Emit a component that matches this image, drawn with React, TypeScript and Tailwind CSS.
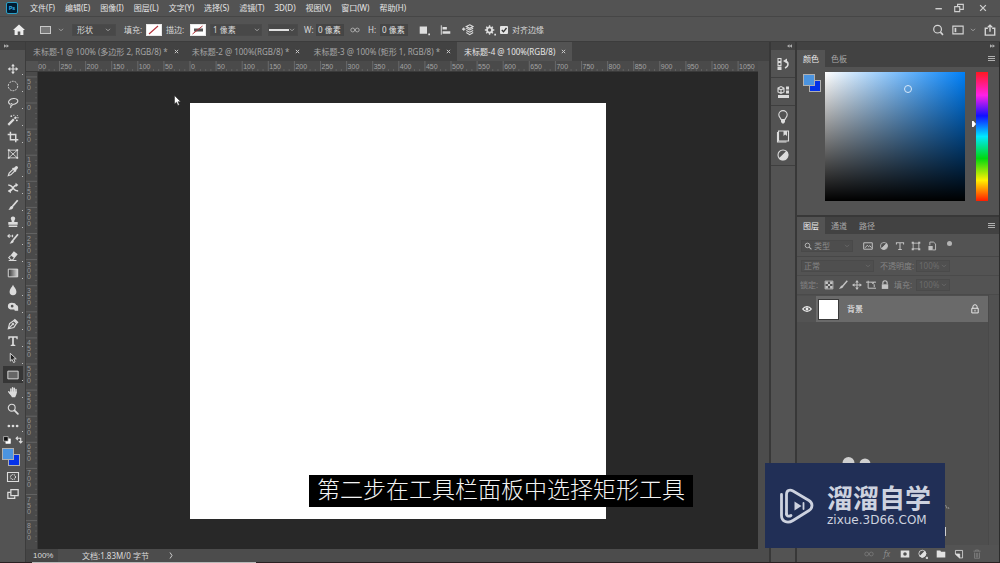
import type { ReactNode } from "react";

const menus = ["文件(F)", "编辑(E)", "图像(I)", "图层(L)", "文字(Y)", "选择(S)", "滤镜(T)", "3D(D)", "视图(V)", "窗口(W)", "帮助(H)"];

const documents = [
  { name: "未标题-1 @ 100% (多边形 2, RGB/8) *", active: false },
  { name: "未标题-2 @ 100%(RGB/8) *", active: false },
  { name: "未标题-3 @ 100% (矩形 1, RGB/8) *", active: false },
  { name: "未标题-4 @ 100%(RGB/8)", active: true },
];

/** Distance on screen between two labelled ruler marks (50 document pixels). */
const RULER_STEP = 26.1;

function Glyph({ children, className = "size-3.5" }: { children: ReactNode; className?: string }) {
  return (
    <svg viewBox="0 0 14 14" className={`shrink-0 ${className}`} fill="none" stroke="currentColor" strokeWidth="1.1" aria-hidden="true">
      {children}
    </svg>
  );
}

function Chevron() {
  return (
    <svg viewBox="0 0 6 4" className="pointer-events-none h-1 w-1.5 shrink-0" fill="none" stroke="#a0a0a0" aria-hidden="true">
      <path d="M1 .8 3 2.8 5 .8" />
    </svg>
  );
}

const tools: { label: string; icon: ReactNode; more?: boolean; active?: boolean }[] = [
  {
    label: "移动工具",
    more: true,
    icon: (
      <Glyph>
        <path d="M7 3v8M3 7h8" strokeWidth="1.400" />
        <path d="M7 .8 9.200 3.800H4.800zM7 13.200 9.200 10.200H4.800zM.8 7 3.800 4.800v4.400zM13.200 7 10.200 4.800v4.400z" fill="currentColor" stroke="none" />
      </Glyph>
    ),
  },
  { label: "椭圆选框工具", more: true, icon: <Glyph><circle cx="7" cy="7" r="5.500" strokeDasharray="2.2 1.2" /></Glyph> },
  {
    label: "套索工具",
    more: true,
    icon: (
      <Glyph>
        <path d="M4.200 8.800C1.800 8 1.200 5.600 2.700 4 5 1.300 10.500 1 12.300 3.400 13.500 5.600 10.800 8.500 6.500 8.800" strokeWidth="1.300" />
        <path d="M4.500 7.600a1.400 1.400 0 1 1-.6 2.500c.9.7.8 1.700 0 2.700" strokeWidth="1.300" />
      </Glyph>
    ),
  },
  {
    label: "魔棒工具",
    more: true,
    icon: (
      <Glyph>
        <path d="m1.500 12.700 6.500-6.500" strokeWidth="2.600" />
        <path d="m8.800 5.400 2-2" strokeWidth="2.400" />
        <path d="M5 1.500v2M4 2.500h2M11.500 6.500v2M10.500 7.500h2M8 .8v1.500M12.500 1.500l-.8.8M12 4.500h1.500" strokeWidth="1.200" />
      </Glyph>
    ),
  },
  { label: "裁剪工具", more: true, icon: <Glyph><path d="M4 .8v9.400h9.200M.8 4h9.400v9.200" strokeWidth="1.700" /></Glyph> },
  {
    label: "图框工具",
    icon: (
      <Glyph>
        <path d="M2 2.500h10v9H2zM2 2.500l10 9M12 2.500l-10 9" strokeWidth="1" />
        <path d="M1 1.500h2v2H1zM11 1.500h2v2h-2zM1 10.500h2v2H1zM11 10.500h2v2h-2z" fill="currentColor" stroke="none" />
      </Glyph>
    ),
  },
  {
    label: "吸管工具",
    more: true,
    icon: (
      <Glyph>
        <path d="M7 5 2.500 9.500 1.500 12.500l3-1L9 7" strokeWidth="1.300" />
        <path d="m6.500 3.500 4 4" strokeWidth="1.900" />
        <path d="m9 5 2-2" strokeWidth="3.600" strokeLinecap="round" />
      </Glyph>
    ),
  },
  {
    label: "内容感知移动工具",
    more: true,
    icon: (
      <Glyph>
        <path d="M1.500 3.500c3.500 0 4 1.500 5.500 3.500s2 3.500 6 3.500M2 10.500c3.500 0 3.800-1.700 5-3.500s2-3.500 4-3.500" strokeWidth="1.900" />
        <path d="m10 .8 3.200 2.700-3.200 2.500zM4.500 8 .8 10.500l3.700 2.700z" fill="currentColor" stroke="none" />
      </Glyph>
    ),
  },
  {
    label: "画笔工具",
    more: true,
    icon: (
      <Glyph>
        <path d="m12.500 1.500-6 7" strokeWidth="2.100" />
        <path d="M6.600 8.200c1.200 1.200.8 3-1 3.800-1.200.6-2.600.8-4 .3C3 11.600 3 10.800 3.300 10c.6-1.700 2-2.300 3.300-1.800z" fill="currentColor" stroke="none" />
      </Glyph>
    ),
  },
  {
    label: "仿制图章工具",
    more: true,
    icon: (
      <Glyph>
        <path d="M7 .5a2.500 2.500 0 0 1 2.400 3.400C8.600 5.200 8.400 6 8.500 7H12.500v3.200h-11V7h4c.1-1-.1-1.800-.9-3.100A2.500 2.500 0 0 1 7 .5zM2 11.200h10v1.500H2z" fill="currentColor" stroke="none" />
      </Glyph>
    ),
  },
  {
    label: "历史记录画笔工具",
    more: true,
    icon: (
      <Glyph>
        <path d="M12.800 1.500 7 8.500" strokeWidth="2.100" />
        <path d="M7.400 8.200c1 1.200.4 2.900-1.200 3.600-1 .5-2.200.6-3.200.2 1.200-.6 1.300-1.200 1.600-2 .5-1.500 1.700-2.100 2.800-1.800z" fill="currentColor" stroke="none" />
        <path d="M.8 3.500h4.700M3 1.500l-2 2 2 2M6.500 2v3" strokeWidth="1.300" />
      </Glyph>
    ),
  },
  {
    label: "橡皮擦工具",
    more: true,
    icon: (
      <Glyph>
        <path d="m8 1.500 4.500 3.500-3.800 4.500L4.200 6z" fill="currentColor" stroke="none" />
        <path d="M4.200 6.500 2 9l3 2.700h1.500l1.800-2.200M2 12.300h9" strokeWidth="1.200" />
      </Glyph>
    ),
  },
  {
    label: "渐变工具",
    more: true,
    icon: (
      <Glyph>
        <defs>
          <linearGradient id="tool-gradient">
            <stop offset="0" stopColor="#333" />
            <stop offset="1" stopColor="#d8d8d8" />
          </linearGradient>
        </defs>
        <path d="M1.500 2.500h11v9h-11z" fill="url(#tool-gradient)" />
      </Glyph>
    ),
  },
  { label: "模糊工具", more: true, icon: <Glyph><path d="M7 1C8 3.800 11 6 11 9a4 4 0 0 1-8 0C3 6 6 3.800 7 1z" fill="currentColor" stroke="none" /></Glyph> },
  {
    label: "减淡工具",
    more: true,
    icon: (
      <Glyph>
        <path fillRule="evenodd" d="M5.500 2c3.200 0 4.500 1 5.200 2.700 1.700.3 2.300 1.600 2.300 3.100v3.700H9c0-1-.5-1.600-1.500-1.500-4.300.3-6.500-1-6.500-4S3.300 2 5.500 2zm.5 2.500A1.600 1.600 0 1 0 6 7.700 1.600 1.600 0 0 0 6 4.500z" fill="currentColor" stroke="none" />
      </Glyph>
    ),
  },
  {
    label: "钢笔工具",
    more: true,
    icon: (
      <Glyph>
        <path d="m1.500 12.500 1.500-6L8 3l3.200 3.200L8 11zM2 12l4.500-4.500" strokeWidth="1.300" />
        <path d="M8.500 1.500 12.700 5.700" strokeWidth="2" />
        <circle cx="7" cy="7" r="1" fill="currentColor" />
      </Glyph>
    ),
  },
  { label: "横排文字工具", more: true, icon: <Glyph><path d="M1.500 1.500h11v3.500h-1.300L10.700 3.200H8v8l1.700.4v1.200H4.300v-1.200L6 11.200v-8H3.300L2.800 5H1.500z" fill="currentColor" stroke="none" /></Glyph> },
  {
    label: "路径选择工具",
    more: true,
    icon: <Glyph><path d="M3.800 1.500v9.200l2.200-2 1.600 3.600 1.800-.8-1.600-3.500h3z" fill="#202020" stroke="currentColor" /></Glyph>,
  },
  { label: "矩形工具", more: true, active: true, icon: <Glyph><path d="M1 2.500h12v9H1z" fill="#666" /></Glyph> },
  {
    label: "抓手工具",
    more: true,
    icon: (
      <Glyph>
        <path d="M4.500 8V3.500M6.500 7V2M8.500 7V2.500M10.500 7.500V4M4 9 2 6.800" strokeWidth="1.700" strokeLinecap="round" />
        <path d="M3.800 6.500h7.500c.2 2.500-.3 4-1.800 6.500H5.800C4.500 11 3 9.500 2.500 8z" fill="currentColor" stroke="none" />
      </Glyph>
    ),
  },
  {
    label: "缩放工具",
    icon: (
      <Glyph>
        <circle cx="5.500" cy="5.500" r="4" strokeWidth="1.300" />
        <path d="m8.700 8.700 4 4" strokeWidth="2" strokeLinecap="round" />
      </Glyph>
    ),
  },
  {
    label: "编辑工具栏",
    more: true,
    icon: (
      <Glyph>
        <g fill="currentColor" stroke="none">
          <circle cx="2.200" cy="7" r="1.600" />
          <circle cx="7" cy="7" r="1.600" />
          <circle cx="11.800" cy="7" r="1.600" />
        </g>
      </Glyph>
    ),
  },
];

function MenuBar() {
  return (
    <header className="flex h-[17px] shrink-0 items-center border-b border-[#464646] pr-3">
      <div className="ml-1.5 flex h-3 w-3 items-center justify-center rounded-[2px] border border-[#2ba0c8] bg-[#001d33] text-[6px] font-bold text-[#31a8e0]">Ps</div>
      <nav className="ml-3 flex gap-2.5 text-[8px] text-[#e4e4e4]">
        {menus.map((m) => (
          <button key={m} type="button" className="leading-4 whitespace-nowrap">
            {m}
          </button>
        ))}
      </nav>
      <div className="ml-auto flex items-center gap-2.5 text-[#cfcfcf]">
        <button type="button" aria-label="最小化">
          <Glyph className="size-2.5"><path d="M2 8h9" strokeWidth="2" /></Glyph>
        </button>
        <button type="button" aria-label="还原">
          <Glyph className="size-2.5"><path d="M1 5h7v7H1zM5 5V2h8v7H8" strokeWidth="1.600" /></Glyph>
        </button>
        <button type="button" aria-label="关闭" className="ml-1">
          <Glyph className="size-2.5"><path d="m3 3 8 8M11 3l-8 8" strokeWidth="1.800" /></Glyph>
        </button>
      </div>
    </header>
  );
}

function NumberBox({ label, value }: { label: string; value: string }) {
  return <input aria-label={label} defaultValue={value} className="h-3 w-7 border border-[#454545] bg-[#464646] px-px text-[8px] text-[#e0e0e0]" />;
}

function OptionsBar() {
  return (
    <section className="flex h-6 shrink-0 items-center pt-px pr-1 text-[8px] whitespace-nowrap text-[#d8d8d8]">
      <button type="button" aria-label="主页" className="ml-3">
        <Glyph className="size-3.5"><path d="M7 1.500 13 7h-1.600v5H8.300V8.500H5.700V12H2.600V7H1z" fill="#ececec" stroke="none" /></Glyph>
      </button>
      <button type="button" aria-label="矩形工具预设" className="ml-3.5 flex w-6 items-center justify-between">
        <span className="h-2 w-[11px] border border-[#c8c8c8] bg-[#777]" />
        <Chevron />
      </button>
      <label className="ml-2 flex h-3 w-11 items-center border border-[#4a4a4a] bg-[#484848] pr-1">
        <select aria-label="工具模式" className="min-w-0 flex-1 appearance-none bg-transparent pl-1 leading-3 outline-none">
          <option>形状</option>
        </select>
        <Chevron />
      </label>
      <span className="ml-2 w-[22px]">填充:</span>
      <button type="button" aria-label="填充颜色" className="h-3 w-4 border border-[#e8e8e8] bg-white">
        <svg viewBox="0 0 14 10" className="size-full" preserveAspectRatio="none"><path d="m2 9 9-8" stroke="#b3323a" strokeWidth="1.200" /></svg>
      </button>
      <span className="ml-1 w-6">描边:</span>
      <button type="button" aria-label="描边颜色" className="h-3 w-4 border border-[#e8e8e8] bg-white">
        <svg viewBox="0 0 14 10" className="size-full" preserveAspectRatio="none">
          <path d="M3 3.500h9v3H3z" fill="#555" />
          <path d="m1.500 9 10-8" stroke="#b3323a" />
        </svg>
      </button>
      <label className="ml-1 flex h-3 w-[52px] items-center border border-[#4a4a4a] bg-[#484848] pr-px">
        <input aria-label="描边宽度" defaultValue="1 像素" className="min-w-0 flex-1 bg-transparent pl-0.5 leading-3 outline-none" />
        <Chevron />
      </label>
      <button type="button" aria-label="描边类型" className="ml-1.5 flex h-3 w-[30px] items-center justify-between border border-[#4a4a4a] bg-[#484848] pr-0.5">
        <span className="h-0.5 w-5 bg-[#e0e0e0]" />
        <Chevron />
      </button>
      <span className="ml-1.5 w-3">W:</span>
      <NumberBox label="宽度" value="0 像素" />
      <button type="button" aria-label="链接宽高" className="ml-1.5 text-[#bdbdbd]">
        <Glyph className="size-2.5"><circle cx="3.800" cy="7" r="2.700" /><circle cx="10.200" cy="7" r="2.700" /></Glyph>
      </button>
      <span className="ml-2 w-3">H:</span>
      <NumberBox label="高度" value="0 像素" />
      <div className="ml-2.5 flex items-center gap-2.5 text-[#dedede]">
        <button type="button" aria-label="路径操作">
          <Glyph className="size-3"><path d="M2 3h8.500v8.500H2zM12 11h2v2h-2z" fill="currentColor" stroke="none" /></Glyph>
        </button>
        <button type="button" aria-label="路径对齐方式">
          <Glyph className="size-3"><path d="M1.500 1.500v11" /><path d="M3 3.500h5v3H3zM3 8.500h9v3H3z" fill="currentColor" stroke="none" /></Glyph>
        </button>
        <button type="button" aria-label="路径排列方式">
          <Glyph className="size-3"><path d="m9 1 4 2-4 2-4-2zM5 5l4 2 4-2M5 7.500l4 2 4-2M5 10l4 2.500 4-2.500M0 6h4M2 4v4" strokeWidth="1.300" /></Glyph>
        </button>
        <button type="button" aria-label="更多选项">
          <Glyph className="size-3"><circle cx="6.500" cy="7" r="3" strokeWidth="2.200" /><path d="M6.500 1.500v2M6.500 10.500v2M1 7h2M10 7h2M2.600 3.100 4 4.500M9 9.500l1.400 1.400M2.600 10.900 4 9.500M9 4.500l1.400-1.400" strokeWidth="1.600" /><path d="M12 11.500h2v2h-2z" fill="currentColor" stroke="none" /></Glyph>
        </button>
      </div>
      <label className="ml-1 flex items-center gap-1">
        <span className="relative flex size-2">
          <input type="checkbox" defaultChecked className="peer size-2 appearance-none rounded-[1px] bg-[#e3e3e3]" />
          <svg viewBox="0 0 8 8" className="pointer-events-none absolute inset-0 hidden size-2 peer-checked:block" fill="none" stroke="#333" strokeWidth="1.300"><path d="m1.800 4 1.700 1.800L6.500 2" /></svg>
        </span>
        对齐边缘
      </label>
      <div className="ml-auto flex items-center gap-2 text-[#d6d6d6]">
        <button type="button" aria-label="搜索">
          <Glyph className="size-3"><circle cx="6.500" cy="6" r="4.500" strokeWidth="1.400" /><path d="m9.800 9.500 3 3.200" strokeWidth="1.800" /></Glyph>
        </button>
        <button type="button" aria-label="工作区" className="flex items-center gap-1.5">
          <Glyph className="size-3"><path d="M1 2.500h12v9H1z" strokeWidth="1.300" /><path d="M3 4.500h2v5H3z" fill="currentColor" stroke="none" /></Glyph>
          <Chevron />
        </button>
        <button type="button" aria-label="共享">
          <Glyph className="size-3"><path d="M4.500 5H1.500v8h11V5h-3M7 9V1.500M4.500 3.800 7 1.300l2.500 2.500" strokeWidth="1.600" /></Glyph>
        </button>
      </div>
    </section>
  );
}

function CollapseMark({ right = false }: { right?: boolean }) {
  return (
    <svg viewBox="0 0 6 4" className="h-1 w-[5px]" fill="#b0b0b0" aria-hidden="true">
      {right ? <path d="m0 0 3 2-3 2zM3 0l3 2-3 2z" /> : <path d="M3 0 0 2l3 2zM6 0 3 2l3 2z" />}
    </svg>
  );
}

function SwatchPair() {
  return (
    <div className="grid h-[18px] w-[18px] grid-cols-3 grid-rows-3">
      <button type="button" aria-label="背景色" className="col-span-2 col-start-2 row-span-2 row-start-2 border border-[#b0b0b0] bg-[#0432e8]" />
      <button type="button" aria-label="前景色" className="col-span-2 col-start-1 row-span-2 row-start-1 border border-[#b0b0b0] bg-[#4b94e0]" />
    </div>
  );
}

function Toolbar() {
  return (
    <aside className="flex w-[26px] shrink-0 flex-col border-r border-[#3c3c3c]">
      <div className="flex h-2 items-center bg-[#424242] pl-1">
        <CollapseMark right />
      </div>
      <div className="flex flex-col items-center pt-2.5 text-[#dcdcdc]">
        {tools.map((t) => (
          <button key={t.label} type="button" aria-label={t.label} className={`relative flex h-[17px] w-5 items-center justify-center [&>svg]:size-3 ${t.active ? "bg-[#363636]" : ""}`}>
            {t.icon}
            {t.more && <span className="absolute right-0 bottom-0.5 size-px bg-[#c0c0c0]" />}
          </button>
        ))}
        <div className="mt-0.5 flex gap-1">
          <button type="button" aria-label="默认颜色">
            <Glyph className="size-2"><path d="M5 5h8v8H5z" fill="#fff" stroke="#fff" /><path d="M1 1h8v8H1z" fill="#111" stroke="#ddd" /></Glyph>
          </button>
          <button type="button" aria-label="切换颜色">
            <Glyph className="size-2"><path d="M2 4h8v7M5 1 2 4l3 3M7 9l3 3 3-3" strokeWidth="2" /></Glyph>
          </button>
        </div>
        <div className="mt-1 mr-1">
          <SwatchPair />
        </div>
        <button type="button" aria-label="快速蒙版" className="mt-1">
          <Glyph className="size-3.5"><path d="M1.500 2.500h11v9h-11z" /><circle cx="7" cy="7" r="2.500" strokeDasharray="1 .8" /></Glyph>
        </button>
        <button type="button" aria-label="屏幕模式" className="mt-1">
          <Glyph className="size-3"><path d="M4.500 5H1v7h8V9.500" strokeWidth="1.500" /><path d="M4.500 2H13v7H4.500z" strokeWidth="1.500" /></Glyph>
        </button>
      </div>
    </aside>
  );
}

function HorizontalRuler() {
  const marks = Array.from({ length: 28 }, (_, i) => (i - 6) * 50);
  return (
    <svg className="h-2.5 min-w-0 flex-1" aria-label="水平标尺">
      {marks.map((m) => {
        const x = 152 + (m / 50) * RULER_STEP;
        return (
          <g key={m}>
            <path d={`M${x} 0v10`} stroke="#686868" strokeWidth="1" />
            {[1, 2, 3, 4].map((n) => (
              <path key={n} d={`M${x + (n * RULER_STEP) / 5} 8v2`} stroke="#606060" strokeWidth="1" />
            ))}
            <text x={x + 1} y="8" fill="#a2a2a2" className="font-['Liberation_Sans',sans-serif] text-[7px]">
              {Math.abs(m)}
            </text>
          </g>
        );
      })}
    </svg>
  );
}

function VerticalRuler() {
  const marks = Array.from({ length: 18 }, (_, i) => (i - 1) * 50);
  return (
    <svg className="h-full w-3 shrink-0 border-r border-[#3a3a3a] bg-[#4a4a4a]" aria-label="垂直标尺">
      {marks.map((m) => {
        const y = 31 + (m / 50) * RULER_STEP;
        return (
          <g key={m}>
            <path d={`M0 ${y}h12`} stroke="#636363" strokeWidth="1" />
            {[1, 2, 3, 4].map((n) => (
              <path key={n} d={`M9 ${y + (n * RULER_STEP) / 5}h3`} stroke="#5c5c5c" strokeWidth="1" />
            ))}
            {String(Math.abs(m)).split("").map((digit, i) => (
              <text key={i} x="1" y={y + 7 + i * 6} fill="#989898" className="font-['Liberation_Sans',sans-serif] text-[7px]">
                {digit}
              </text>
            ))}
          </g>
        );
      })}
    </svg>
  );
}

function Workspace() {
  return (
    <main className="flex min-w-0 flex-1 flex-col">
      <div className="flex h-[19px] shrink-0 bg-[#424242] text-[8px] whitespace-nowrap">
        {documents.map((d) => (
          <div key={d.name} className={`flex items-center gap-1.5 pr-1.5 pl-[7px] ${d.active ? "bg-[#535353] text-[#e6e6e6]" : "text-[#a6a6a6]"}`}>
            <button type="button">{d.name}</button>
            <button type="button" aria-label="关闭文档">
              <svg viewBox="0 0 6 6" className="size-[5px]" stroke="#c8c8c8" strokeWidth="1.200"><path d="m1 1 4 4M5 1 1 5" /></svg>
            </button>
          </div>
        ))}
      </div>
      <div className="flex min-h-0 flex-1">
        <div className="flex min-w-0 flex-1 flex-col">
          <div className="flex h-[11px] shrink-0 border-b border-[#3a3a3a] bg-[#4a4a4a]">
            <div className="w-3 shrink-0 bg-[#525252]" />
            <HorizontalRuler />
          </div>
          <div className="flex min-h-0 flex-1">
            <VerticalRuler />
            <div className="flex min-w-0 flex-1 items-center justify-center bg-[#282828]">
              <div className="aspect-square w-[416px] bg-white" />
            </div>
          </div>
        </div>
        <div className="w-[11px] shrink-0 bg-[#4c4c4c]" />
      </div>
      <footer className="flex h-[13px] shrink-0 items-center bg-[#4c4c4c] text-[8px] text-[#dadada]">
        <span className="flex h-full w-8 items-center bg-[#454545] pl-[7px]">
          <span className="font-['Liberation_Sans',sans-serif] whitespace-nowrap">100%</span>
        </span>
        <span className="ml-6 w-[87px] whitespace-nowrap">
          文档:1.83M/0 字节
        </span>
        <button type="button" aria-label="状态栏选项">
          <svg viewBox="0 0 4 7" className="h-[7px] w-1" fill="none" stroke="#ccc"><path d="m1 .5 2 3-2 3" /></svg>
        </button>
      </footer>
    </main>
  );
}

function IconDock() {
  return (
    <aside className="flex w-7 shrink-0 flex-col border-x-2 border-[#383838] text-[#dcdcdc]">
      <div className="flex h-2 items-center justify-center bg-[#424242] pl-3">
        <CollapseMark />
      </div>
      <div className="flex h-7 items-center justify-center border-b border-[#3f3f3f]">
        <button type="button" aria-label="历史记录">
          <Glyph className="size-3.5"><path d="M2 1.500h3v3H2zM2 5.500h3v3H2z" /><path d="M1.500 9.500H5.500v3.500h-4zM7 4l4-2.500v5z" fill="currentColor" stroke="none" /><path d="M9 4c4 .5 4 5 0 7" strokeWidth="1.500" /></Glyph>
        </button>
      </div>
      <div className="flex h-7 items-center justify-center border-b border-[#3f3f3f]">
        <button type="button" aria-label="属性">
          <Glyph className="size-3.5"><path d="m2 3 3-1.500L8 3v4L5 8.500 2 7zM2 3l3 2 3-2M5 5v3" /><path d="M10 1.500h3v3h-3zM10 5.500h3v3h-3zM2 10h11v3H2z" fill="currentColor" stroke="none" /></Glyph>
        </button>
      </div>
      <div className="flex h-[60px] flex-col items-center justify-center gap-[5px] border-b border-[#3f3f3f]">
        <button type="button" aria-label="学习">
          <Glyph className="size-3.5"><path d="M5 9.500C5 8 2.800 7.500 2.800 4.800a4.200 4.200 0 0 1 8.400 0C11.200 7.500 9 8 9 9.500z" /><path d="M5 10h4v2L7.800 13.500H6.200L5 12z" fill="currentColor" stroke="none" /></Glyph>
        </button>
        <button type="button" aria-label="库">
          <Glyph className="size-3.5"><path d="M2.500 2H12.500v10h-10z" /><path d="M2.500 3.500h-1v9.500h9" /><path d="M7.500 2h3.500v5L9.200 5.500 7.500 7z" fill="currentColor" stroke="none" /></Glyph>
        </button>
        <button type="button" aria-label="调整">
          <Glyph className="size-3.5"><circle cx="7" cy="7" r="5" /><path d="M10.500 3.500a5 5 0 0 1-7 7z" fill="currentColor" /></Glyph>
        </button>
      </div>
    </aside>
  );
}

function PanelTabs({ tabs }: { tabs: string[] }) {
  return (
    <div className="flex h-[17px] shrink-0 items-stretch bg-[#424242] text-[8px]">
      {tabs.map((t, i) => (
        <button key={t} type="button" className={`px-1.5 ${i === 0 ? "bg-[#535353] text-[#ececec]" : "text-[#a8a8a8]"}`}>
          {t}
        </button>
      ))}
      <button type="button" aria-label="面板菜单" className="mr-1 ml-auto flex items-center">
        <svg viewBox="0 0 7 5" className="h-[5px] w-[7px]" stroke="#b0b0b0" strokeWidth="1"><path d="M0 .5h7M0 2.500h7M0 4.500h7" /></svg>
      </button>
    </div>
  );
}

function ColorPanel() {
  return (
    <section>
      <PanelTabs tabs={["颜色", "色板"]} />
      <div className="flex h-[148px] pt-[5px] pr-[11px] pl-1.5">
        <div className="w-[22px] pt-0.5">
          <SwatchPair />
        </div>
        <div className="relative h-[129px] flex-1 bg-[linear-gradient(to_top,#000,transparent),linear-gradient(to_right,#fff,#0080f8)]">
          <span className="absolute top-[13px] left-[79px] size-2 rounded-full border border-[#d8e9fa]" />
        </div>
        <div className="flex w-[11px] items-start justify-end pt-[49px]">
          <svg viewBox="0 0 4 6" className="h-1.5 w-1" fill="#fff"><path d="M0 0h1.500L4 3 1.500 6H0z" /></svg>
        </div>
        <input
          type="range"
          aria-label="色相"
          min="0"
          max="360"
          defaultValue="211"
          className="h-[129px] w-3 appearance-none bg-[linear-gradient(to_bottom,#ff1820,#ff20e8_18%,#1010ff_34%,#00e8ff_50%,#00d810_67%,#fff000_84%,#ff1c00)] [writing-mode:vertical-lr] [&::-webkit-slider-thumb]:appearance-none [&::-webkit-slider-thumb]:opacity-0"
        />
      </div>
    </section>
  );
}

function DimSelect({ label, value, className }: { label: string; value: string; className: string }) {
  return (
    <label className={`flex h-3 items-center border border-[#4a4a4a] bg-[#4f4f4f] pr-0.5 ${className}`}>
      <select aria-label={label} className="min-w-0 flex-1 appearance-none bg-transparent pl-0.5 leading-3 outline-none">
        <option>{value}</option>
      </select>
      <span className="flex opacity-30">
        <Chevron />
      </span>
    </label>
  );
}

function LayersPanel() {
  return (
    <section className="flex min-h-0 flex-1 flex-col border-t-2 border-[#383838] text-[8px]">
      <PanelTabs tabs={["图层", "通道", "路径"]} />
      <div className="flex h-[23px] shrink-0 items-center border-b border-[#474747] pt-0.5 pl-1 text-[#8c8c8c]">
        <label className="flex h-3 w-[52px] items-center border border-[#494949] bg-[#4d4d4d] px-0.5">
          <Glyph className="size-2"><circle cx="6" cy="6" r="4" stroke="#bbb" strokeWidth="1.600" /><path d="m9 9 4 4" stroke="#bbb" strokeWidth="1.800" /></Glyph>
          <select aria-label="筛选类型" className="min-w-0 flex-1 appearance-none bg-transparent pl-0.5 leading-3 outline-none">
            <option>类型</option>
          </select>
          <span className="flex opacity-30"><Chevron /></span>
        </label>
        <div className="ml-2.5 flex gap-1.5 text-[#c0c0c0]">
          <button type="button" aria-label="像素图层"><Glyph className="size-2.5"><path d="M1 2.500h12v9H1zM3 9.500 6 6l2 2 1.500-1.500L12 9.500" strokeWidth="1.400" /></Glyph></button>
          <button type="button" aria-label="调整图层"><Glyph className="size-2.5"><circle cx="7" cy="7" r="5" /><path d="M10.500 3.500a5 5 0 0 1-7 7z" fill="currentColor" /></Glyph></button>
          <button type="button" aria-label="文字图层"><Glyph className="size-2.5"><path d="M2 5V2.500h10V5M7 2.500V12M4.500 12h5" strokeWidth="1.500" /></Glyph></button>
          <button type="button" aria-label="形状图层"><Glyph className="size-2.5"><path d="M3 3h8v8H3z" strokeWidth="1.300" /><path d="M1 1h3v3H1zM10 1h3v3h-3zM1 10h3v3H1zM10 10h3v3h-3z" fill="currentColor" stroke="none" /></Glyph></button>
          <button type="button" aria-label="智能对象"><Glyph className="size-2.5"><path d="M4 6V1.500h5L12 4v8.500H8" strokeWidth="1.300" /><path d="M2 7h6v6H2z" fill="currentColor" stroke="none" /></Glyph></button>
        </div>
        <button type="button" aria-label="图层筛选开关" className="mb-1.5 ml-2.5 size-[5px] rounded-full bg-[#b4b4b4]" />
      </div>
      <div className="flex h-[19px] shrink-0 items-center border-b border-[#4a4a4a] pl-1 text-[#858585]">
        <DimSelect label="混合模式" value="正常" className="w-[73px]" />
        <span className="ml-1.5 w-[36px] whitespace-nowrap">不透明度:</span>
        <DimSelect label="不透明度" value="100%" className="w-[34px] text-[#6c6c6c]" />
      </div>
      <div className="flex h-[19px] shrink-0 items-center border-b border-[#4a4a4a] pl-[3px] text-[#858585]">
        <span className="w-6">锁定:</span>
        <div className="flex gap-1 text-[#c4c4c4]">
          <button type="button" aria-label="锁定透明像素"><Glyph className="size-2.5"><path d="M1.500 1.500h11v11h-11z" /><path d="M2 2h3.500v3.500H2zM8.500 2H12v3.500H8.500zM5.500 5.500h3v3h-3zM2 8.500h3.500V12H2zM8.500 8.500H12V12H8.500z" fill="currentColor" stroke="none" /></Glyph></button>
          <button type="button" aria-label="锁定图像像素"><Glyph className="size-2.5"><path d="m13 1-6 7" strokeWidth="2" /><path d="M7 7.500c1.500 1.500.5 4.500-5.500 5C3 11 3.500 7.500 7 7.500z" fill="currentColor" stroke="none" /></Glyph></button>
          <button type="button" aria-label="锁定位置"><Glyph className="size-2.5"><path d="M7 2v10M2 7h10" strokeWidth="1.400" /><path d="M7 0 9.500 3.500h-5zM7 14l2.500-3.500h-5zM0 7l3.500-2.500v5zM14 7l-3.500-2.500v5z" fill="currentColor" stroke="none" /></Glyph></button>
          <button type="button" aria-label="锁定画板"><Glyph className="size-2.5"><path d="M0 3h14M3 1v10.500h11M8 3l3.500 3.500V10M11.500 3 9 5" strokeWidth="1.400" /></Glyph></button>
          <button type="button" aria-label="全部锁定"><Glyph className="size-2.5"><path d="M4 6V4a3 3 0 0 1 6 0v2" strokeWidth="1.600" /><path d="M2.500 6h9v6.500h-9z" fill="currentColor" stroke="none" /></Glyph></button>
        </div>
        <span className="ml-1 w-[22px]">填充:</span>
        <DimSelect label="填充" value="100%" className="w-[34px] text-[#6c6c6c]" />
      </div>
      <div className="flex min-h-0 flex-1 bg-[#4e4e4e]">
        <ul className="min-w-0 flex-1 pt-px">
          <li className="flex h-[26px] items-stretch">
            <button type="button" aria-label="显示图层" className="flex w-[19px] items-center justify-center bg-[#535353] text-[#eee]">
              <Glyph className="size-2.5"><path d="M1 7c3-4.500 9-4.500 12 0-3 4.500-9 4.500-12 0z" strokeWidth="1.800" /><circle cx="7" cy="7" r="2" fill="currentColor" stroke="none" /></Glyph>
            </button>
            <div className="flex flex-1 items-center bg-[#6a6a6a] pr-2 pl-0.5 text-[#f0f0f0]">
              <span className="size-[21px] border border-[#3a3a3a] bg-white" />
              <span className="ml-2">背景</span>
              <Glyph className="ml-auto size-2.5"><path d="M4 6V4a3 3 0 0 1 6 0v2M2.500 6h9v6.500h-9zM7 8v2.500" strokeWidth="1.300" /></Glyph>
            </div>
          </li>
        </ul>
        <div className="w-[11px] border-l border-[#494949] bg-[#515151]" />
      </div>
      <div className="flex h-[17px] shrink-0 items-center justify-end gap-2 pr-[17px] text-[#e2e2e2]">
        <button type="button" aria-label="链接图层" className="text-[#7c7c7c]"><Glyph className="size-2.5"><circle cx="3.800" cy="7" r="2.700" /><circle cx="10.200" cy="7" r="2.700" /></Glyph></button>
        <button type="button" aria-label="图层样式" className="w-2.5 text-[8px] text-[#8a8a8a] italic">fx</button>
        <button type="button" aria-label="图层蒙版"><Glyph className="size-2.5"><path fillRule="evenodd" d="M1 2h12v10H1zM7 4.500a2.500 2.500 0 1 0 0 5 2.500 2.500 0 0 0 0-5z" fill="currentColor" stroke="none" /></Glyph></button>
        <button type="button" aria-label="新建调整图层"><Glyph className="size-2.5"><circle cx="6" cy="6.500" r="4.800" /><path d="M9.500 3a4.800 4.800 0 0 1-7 7zM11.500 11.500h2v2h-2z" fill="currentColor" /></Glyph></button>
        <button type="button" aria-label="新建组"><Glyph className="size-2.5"><path d="M1 2h5l1 2h6v8H1z" fill="currentColor" stroke="none" /></Glyph></button>
        <button type="button" aria-label="新建图层"><Glyph className="size-2.5"><path d="M2 2h10v10.500H8L2 7z" /><path d="M2 7h6v5.500z" fill="currentColor" /></Glyph></button>
        <button type="button" aria-label="删除图层" className="text-[#7c7c7c]"><Glyph className="size-2.5"><path d="M2 3h10M5 3V1.500h4V3M3.500 5v8h7V5M6 5.500V12M8 5.500V12" strokeWidth="1.300" /></Glyph></button>
      </div>
    </section>
  );
}

function Watermark() {
  return (
    <div className="absolute right-[55px] bottom-[15px]">
      <svg viewBox="0 0 108 85" className="absolute -top-1.5 left-[77px] h-[85px] w-[108px]" fill="#cfcfcf" aria-hidden="true">
        <ellipse cx="6.500" cy="6" rx="6" ry="6" />
        <ellipse cx="23" cy="7" rx="5.500" ry="5.500" />
        <path d="m103.500 48 1.500 3.500M106 50l1 2" stroke="#8d8d8d" />
        <path d="M103.500 70v9" stroke="#cfcfcf" />
      </svg>
      <div className="relative flex h-[85px] w-[180px] items-center bg-[#212f56] pl-3.5 text-[#cdd2df]">
        <svg viewBox="0 0 36 36" className="size-9 shrink-0" fill="none" stroke="currentColor" strokeWidth="2.800" strokeLinecap="round" strokeLinejoin="round" aria-hidden="true">
          <path d="M7.500 26V6.500c0-4 3-5.500 6.500-3.500l16 9.500c4 2.500 4 7.500 0 10L14 32.500c-5.500 3.500-11.500 1-11.500-5V6.500" />
          <path d="M7.500 26c0 2.500 3 2.500 4.500 1.500" />
          <path d="M15.500 13.500v9l7-4.500z" fill="currentColor" stroke="none" />
          <path d="M24.500 15v6" strokeWidth="1.800" />
        </svg>
        <div className="ml-3 flex flex-col whitespace-nowrap">
          <span className="text-[26px] leading-7 font-bold">溜溜自学</span>
          <span className="font-['DejaVu_Sans'] text-[12px] leading-4">zixue.3D66.COM</span>
        </div>
      </div>
    </div>
  );
}

export default function App() {
  return (
    <div className="relative flex h-screen flex-col overflow-hidden bg-[#535353] font-['Noto_Sans','Noto_Sans_CJK_SC',sans-serif]">
      <MenuBar />
      <OptionsBar />
      <div className="flex min-h-0 flex-1 border-t border-[#3c3c3c]">
        <Toolbar />
        <Workspace />
        <IconDock />
        <aside className="flex w-[203px] shrink-0 flex-col border-r border-[#2c2c2c]">
          <div className="flex h-2 shrink-0 items-center justify-end bg-[#424242] pr-1">
            <CollapseMark right />
          </div>
          <ColorPanel />
          <LayersPanel />
        </aside>
      </div>
      <div className="flex h-px shrink-0 bg-[#2a2022]">
        <div className="ml-8 h-px w-56 bg-[#b8b8b8]" />
      </div>
      <svg viewBox="0 0 8 11" className="absolute top-[95px] left-[174px] h-[11px] w-2" fill="#fff" stroke="#222" strokeWidth=".5" aria-hidden="true">
        <path d="M.5.5v8.500l2-1.800 1.400 3.200 1.500-.7L4 6.700h2.700z" />
      </svg>
      <p className="absolute bottom-14 left-[309px] bg-black px-2 font-['Liberation_Serif','Noto_Sans_CJK_SC',serif] text-[23px] leading-8 font-light whitespace-nowrap text-[#f4f4f4]">第二步在工具栏面板中选择矩形工具</p>
      <Watermark />
    </div>
  );
}
